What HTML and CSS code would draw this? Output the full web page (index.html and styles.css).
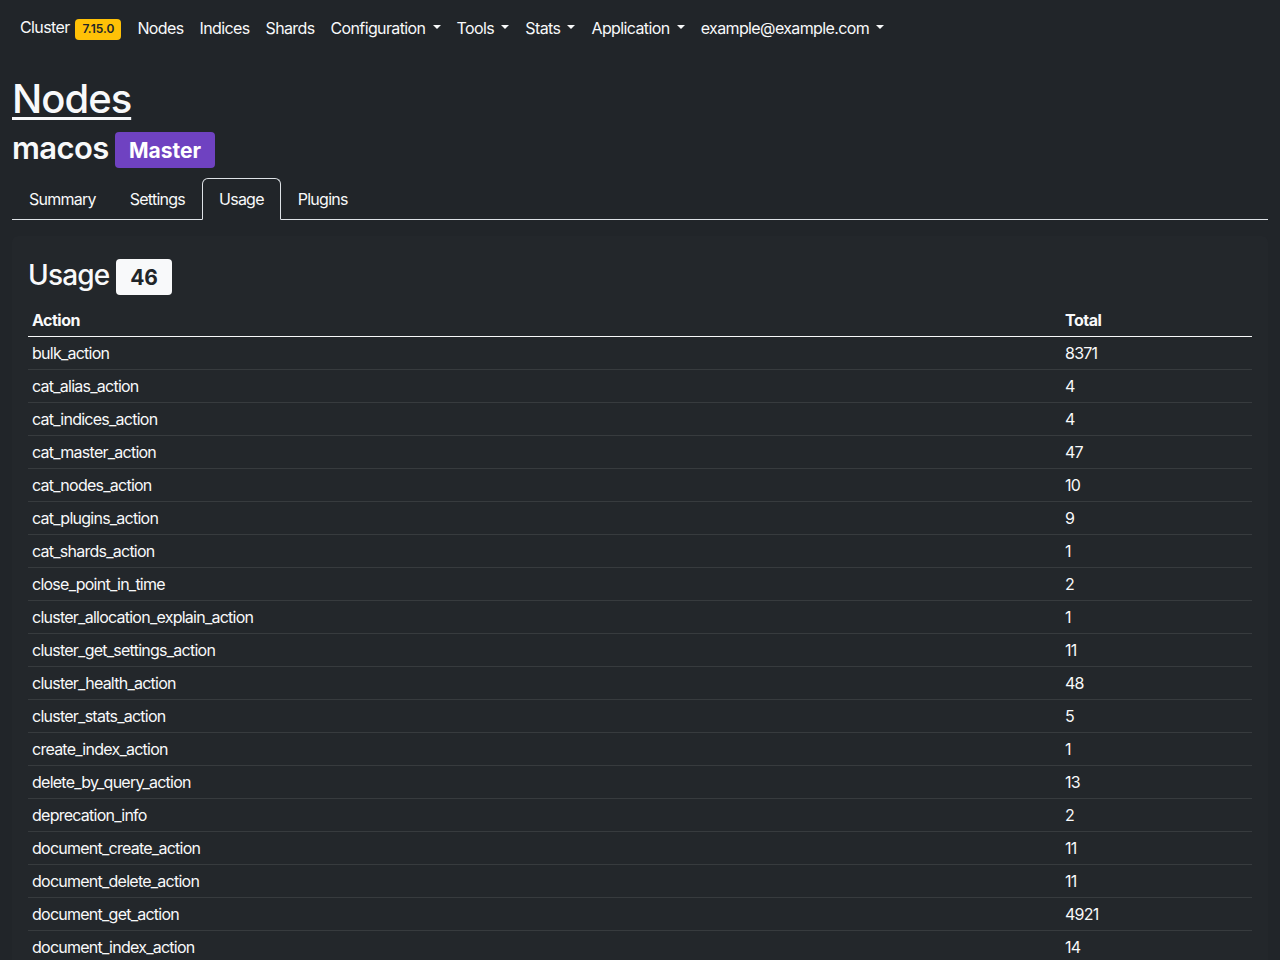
FILE: index.html
```html
<!DOCTYPE html>
<html lang="en">
<head>
<meta charset="utf-8">
<title>Nodes - macos</title>
<link rel="stylesheet" href="styles.css">
</head>
<body>
<nav class="navbar">
  <ul class="nav-list">
    <li><a class="nav-link" href="#">Cluster <span class="badge badge-warning">7.15.0</span></a></li>
    <li><a class="nav-link" href="#">Nodes</a></li>
    <li><a class="nav-link" href="#">Indices</a></li>
    <li><a class="nav-link" href="#">Shards</a></li>
    <li><a class="nav-link dropdown-toggle" href="#">Configuration</a></li>
    <li><a class="nav-link dropdown-toggle" href="#">Tools</a></li>
    <li><a class="nav-link dropdown-toggle" href="#">Stats</a></li>
    <li><a class="nav-link dropdown-toggle" href="#">Application</a></li>
    <li><a class="nav-link dropdown-toggle" href="#">example@example.com</a></li>
  </ul>
</nav>
<main class="container">
  <h1 class="page-title"><a href="#">Nodes</a></h1>
  <h2 class="node-name">macos <span class="badge badge-purple">Master</span></h2>
  <ul class="tabs">
    <li><a class="tab" href="#">Summary</a></li>
    <li><a class="tab" href="#">Settings</a></li>
    <li><a class="tab active" href="#">Usage</a></li>
    <li><a class="tab" href="#">Plugins</a></li>
  </ul>
  <section class="card">
    <h3 class="card-title">Usage <span class="badge badge-light">46</span></h3>
    <table class="usage-table">
      <thead>
        <tr><th>Action</th><th class="col-total">Total</th></tr>
      </thead>
      <tbody>
        <tr><td>bulk_action</td><td>8371</td></tr>
        <tr><td>cat_alias_action</td><td>4</td></tr>
        <tr><td>cat_indices_action</td><td>4</td></tr>
        <tr><td>cat_master_action</td><td>47</td></tr>
        <tr><td>cat_nodes_action</td><td>10</td></tr>
        <tr><td>cat_plugins_action</td><td>9</td></tr>
        <tr><td>cat_shards_action</td><td>1</td></tr>
        <tr><td>close_point_in_time</td><td>2</td></tr>
        <tr><td>cluster_allocation_explain_action</td><td>1</td></tr>
        <tr><td>cluster_get_settings_action</td><td>11</td></tr>
        <tr><td>cluster_health_action</td><td>48</td></tr>
        <tr><td>cluster_stats_action</td><td>5</td></tr>
        <tr><td>create_index_action</td><td>1</td></tr>
        <tr><td>delete_by_query_action</td><td>13</td></tr>
        <tr><td>deprecation_info</td><td>2</td></tr>
        <tr><td>document_create_action</td><td>11</td></tr>
        <tr><td>document_delete_action</td><td>11</td></tr>
        <tr><td>document_get_action</td><td>4921</td></tr>
        <tr><td>document_index_action</td><td>14</td></tr>
      </tbody>
    </table>
  </section>
</main>
</body>
</html>
```
FILE: styles.css
```css
* { box-sizing: border-box; }

html, body {
  margin: 0;
  padding: 0;
}

body {
  background: #212529;
  color: #f8f9fa;
  font-family: Inter, "Noto Sans", "Liberation Sans", sans-serif;
  font-size: 16px;
  line-height: 1.5;
  letter-spacing: -0.62px;
}

a { color: inherit; }

.navbar {
  padding: 7px 12px 9px;
}

.nav-list {
  list-style: none;
  margin: 0;
  padding: 0;
  display: flex;
  align-items: center;
}

.nav-link {
  display: block;
  padding: 8px;
  color: #f8f9fa;
  text-decoration: none;
}

.dropdown-toggle::after {
  content: "";
  display: inline-block;
  margin-left: 0.45em;
  vertical-align: 0.255em;
  border-top: 0.3em solid;
  border-left: 0.3em solid transparent;
  border-right: 0.3em solid transparent;
  border-bottom: 0;
}

.badge {
  display: inline-block;
  font-weight: 700;
  line-height: 1;
  text-align: center;
  white-space: nowrap;
  vertical-align: baseline;
  border-radius: 0.25rem;
  padding: 0.35em 0.65em;
  letter-spacing: 0;
}

.badge-warning {
  background: #ffc107;
  color: #212529;
  font-size: 12px;
  padding: 4px 7px 5px;
  margin-left: 2px;
  font-weight: 600;
}

.badge-purple {
  background: #6f42c1;
  color: #fff;
  font-size: 21px;
  padding: 8px 14px 7px;
  margin-left: -1px;
  vertical-align: 1px;
}

.badge-light {
  background: #f8f9fa;
  color: #212529;
  font-size: 21px;
  padding: 8px 14px 7px;
  margin-left: 0;
}

.container {
  padding: 18px 12px 0;
}

.page-title {
  font-size: 40px;
  font-weight: 500;
  line-height: 1.2;
  margin: 0 0 6px;
  letter-spacing: -1px;
}

.page-title a {
  text-decoration: underline;
  text-underline-offset: 4px;
  text-decoration-thickness: 3px;
}

.node-name {
  font-size: 31px;
  font-weight: 600;
  line-height: 1.2;
  margin: 0 0 10px;
  letter-spacing: -0.6px;
}

.tabs {
  list-style: none;
  margin: 0;
  padding: 0;
  display: flex;
  border-bottom: 1px solid #dee2e6;
}

.tab {
  display: block;
  padding: 8px 16px;
  margin-bottom: -1px;
  border: 1px solid transparent;
  border-top-left-radius: 6px;
  border-top-right-radius: 6px;
  text-decoration: none;
  color: #f8f9fa;
  letter-spacing: -0.75px;
}

.tab.active {
  border-color: #dee2e6 #dee2e6 #212529;
  background: #212529;
}

.card {
  margin-top: 16px;
  padding: 23px 16px 16px;
  background: #23272b;
  border-radius: 6px;
}

.card-title {
  font-size: 28px;
  font-weight: 500;
  line-height: 1.2;
  margin: 0 0 9px;
  letter-spacing: -0.8px;
}

.usage-table {
  width: 100%;
  border-collapse: collapse;
}

.usage-table th,
.usage-table td {
  text-align: left;
  padding: 4px;
  border-bottom: 1px solid #373b3e;
  letter-spacing: -0.75px;
}

.usage-table th {
  font-weight: 700;
  letter-spacing: -0.5px;
}

.usage-table thead th {
  border-bottom: 1.5px solid #f8f9fa;
}

.col-total {
  width: 191px;
}
```
